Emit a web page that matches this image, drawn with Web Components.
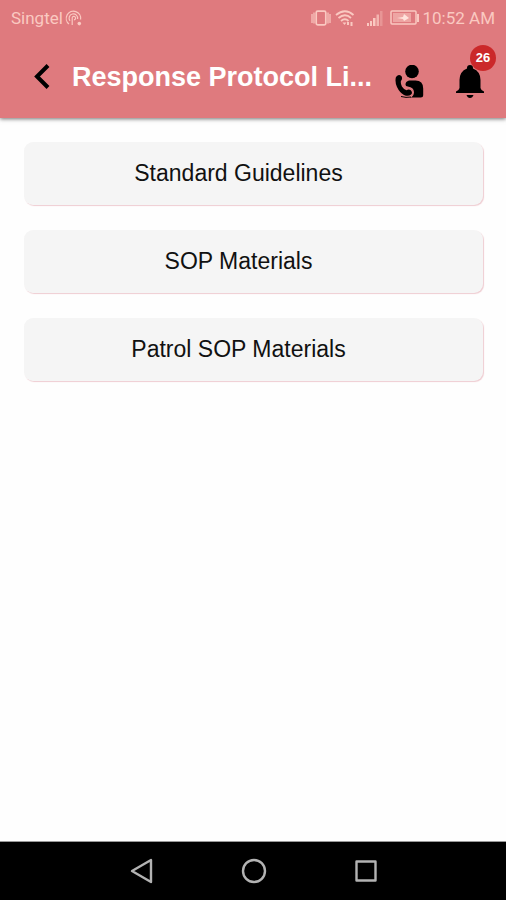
<!DOCTYPE html>
<html lang="en">
<head>
<meta charset="utf-8">
<meta name="viewport" content="width=device-width, initial-scale=1">
<title>Response Protocol List</title>
<style>
  body { margin: 0; background: #fefefe; font-family: "Liberation Sans", Arial, sans-serif; }
</style>
</head>
<body>
<protocol-app></protocol-app>
<script>
const define = (name, html) => {
  const template = document.createElement('template');
  template.innerHTML = html;
  customElements.define(name, class extends HTMLElement {
    constructor() {
      super();
      this.attachShadow({ mode: 'open' }).append(template.content.cloneNode(true));
    }
  });
};

define('status-bar', `
<style>
  :host { display: flex; align-items: center; justify-content: space-between; height: 36px; padding: 0 11px; color: #fac9c1; font: 17px/20px Roboto, sans-serif; }
  .group { display: flex; align-items: center; }
  svg { display: block; flex: none; }
  .hotspot { margin-left: 2px; }
  .signal { margin-left: 11px; }
  .battery { margin: 0 3px 0 7px; }
  .wifi { margin-left: 4px; }
</style>
<div class="group"><span>Singtel</span>
  <svg class="hotspot" width="17" height="18" viewBox="0 0 17 18" fill="none" stroke="currentColor" stroke-width="1.2"><path d="M4 15A7.2 7.2 0 1 1 15.6 10.5M5 11.8A4.3 4.3 0 1 1 12.6 10M7.2 16v-6.8a1.7 1.7 0 1 1 1.7 1.6"/><circle cx="14.3" cy="14.6" r="1.8" fill="currentColor" stroke="none"/></svg>
</div>
<div class="group">
  <svg width="20" height="18" viewBox="0 0 20 18" fill="none" stroke="currentColor" stroke-width="1.7"><rect x="5.2" y="2.2" width="9.6" height="13.6" rx="1.5"/><path d="M1 5v9M3 3.500v11M17 3.500v11M19 5v9" stroke-width="1.2"/></svg>
  <svg class="wifi" width="20" height="18" viewBox="0 0 20 18" fill="none" stroke="currentColor" stroke-width="1.8"><path d="M1 6Q10-1.500 18.500 6M3.500 9Q10 3.500 16 9M6 12Q10 8.500 13.500 12"/><path d="M7.500 13.500h4L9.500 16z" fill="currentColor" stroke="none"/><path d="M13 13v3M16.500 13v4" stroke-width="2"/></svg>
  <svg class="signal" width="17" height="17" viewBox="0 0 17 17" fill="currentColor"><path d="M1 13h2v3H1zM4 11h2v5H4zM7 8h2.500v8H7z"/><path d="M10.500 4.500H13V16h-2.500z" opacity=".75"/><path d="M14 1h2.500v15H14z" opacity=".35"/></svg>
  <svg class="battery" width="30" height="16" viewBox="0 0 30 16" fill="none" stroke="currentColor" stroke-width="1.500"><rect x="1" y="1" width="25" height="13" rx="1"/><path d="M28 4v8" stroke-width="2"/><path d="M3 3h18v9H3z" fill="currentColor" stroke="none" opacity=".55"/><path d="M7 8l6-1 1-3 5 4-5 3-1-2z" fill="#ffe3dc" stroke="none"/></svg>
  <span>10:52 AM</span>
</div>`);

define('count-badge', `
<style>
  :host { display: grid; place-items: center; width: 26px; height: 26px; border-radius: 50%; background: #cb282a; color: #fff; font: bold 13px/16px "Liberation Sans", Arial, sans-serif; }
</style><slot></slot>`);

define('app-header', `
<style>
  :host { display: block; background: #df7a7e; box-shadow: 0 1px 4px rgba(0,0,0,.55); position: relative; }
  .bar { display: flex; align-items: center; height: 82px; padding: 0 21px 0 30px; }
  h1 { flex: 1; min-width: 0; margin: 0 0 0 18px; overflow: hidden; white-space: nowrap; color: #fff; font-size: 27px; line-height: 34px; }
  button { display: block; flex: none; border: 0; padding: 0; background: none; color: #000; }
  svg { display: block; }
  .call { margin: 10px 30px 0 16px; }
  .bell { position: relative; margin-top: 8px; }
  count-badge { position: absolute; left: 15px; top: -19px; }
</style>
<status-bar></status-bar>
<div class="bar">
  <button aria-label="Back"><svg width="24" height="28" viewBox="0 0 24 28" fill="none" stroke="currentColor" stroke-width="4"><path d="M18 2.500 7 13.500l11 11"/></svg></button>
  <h1><slot></slot></h1>
  <button class="call" aria-label="Call contact"><svg width="30" height="34" viewBox="0 0 30 34" fill="currentColor"><circle cx="17" cy="6.500" r="6.800"/><path d="M14 15.500h6.500q7.700 0 7.700 8v6.500q0 2.500-2.500 2.500H15q3.500-2 3.200-5.200-.4-4.600-5.500-5.300-2-.3-2.200-2.200-.1-3.300 3.500-4.300z"/><path d="M3 10.200q2.400-1 3.700 1.300 1 2.500-.8 4.500-.4 3 1 5.500 1.800 3 4.600 3.700 2.300-1.600 4.300.1 2.200 2.200.3 4.300-3 2.300-7.100.3Q4.500 27.500 2 22-.2 17 .8 12.600q.6-1.700 2.200-2.400z"/><path d="M7.500 17.500q1.500 4.500 5.200 4.700 5.500.7 5.700 5.200 0 2.800-2.400 4.600" fill="none" stroke="#df7a7e" stroke-width="1.200"/><path d="M6 31.500q5 1.500 10 .5" stroke="currentColor" fill="none"/></svg></button>
  <button class="bell" aria-label="Notifications, 26 new"><svg width="30" height="34" viewBox="0 0 30 34" fill="currentColor"><path d="M12 4.500V4q0-3 3-3t3 3v.5q7.500 3 7.500 11.500v8q.5 2.500 3.500 3.500v1.500H1v-1.500q3-1 3.500-3.500v-8Q4.500 7.500 12 4.500zM11.500 31h7q-1 3-3.500 3t-3.500-3z"/></svg><count-badge>26</count-badge></button>
</div>`);

define('protocol-item', `
<style>
  :host { display: block; }
  button { display: block; width: 100%; border: 0; border-radius: 9px; padding: 16px 30px 17px 0; background: #f5f5f5; box-shadow: 1px 1px 1px #efcdd2; color: #111; font: 23px/30px "Liberation Sans", Arial, sans-serif; text-align: center; }
</style><button><slot></slot></button>`);

define('nav-bar', `
<style>
  :host { display: flex; justify-content: center; align-items: center; gap: 84px; height: 58px; padding-left: 2px; background: #000; border-top: 1px solid #999; }
  button { display: block; border: 0; padding: 0; background: none; color: #b3b3b3; }
  svg { display: block; }
</style>
<button aria-label="Back"><svg width="28" height="28" viewBox="0 0 28 28" fill="none" stroke="currentColor" stroke-width="2.400" stroke-linejoin="round"><path d="M23 3v22L4 14z"/></svg></button>
<button aria-label="Home"><svg width="28" height="28" viewBox="0 0 28 28" fill="none" stroke="currentColor" stroke-width="2.400"><circle cx="14" cy="14" r="11"/></svg></button>
<button aria-label="Recent apps"><svg width="28" height="28" viewBox="0 0 28 28" fill="none" stroke="currentColor" stroke-width="2.400" stroke-linejoin="round"><rect x="4.500" y="4.500" width="19" height="19"/></svg></button>`);

define('protocol-app', `
<style>
  :host { display: flex; flex-direction: column; min-height: 100vh; }
  main { flex: 1; display: flex; flex-direction: column; gap: 25px; padding: 24px 23px 24px 24px; }
</style>
<app-header>Response Protocol Li...</app-header>
<main>
  <protocol-item>Standard Guidelines</protocol-item>
  <protocol-item>SOP Materials</protocol-item>
  <protocol-item>Patrol SOP Materials</protocol-item>
</main>
<nav-bar></nav-bar>`);
</script>
</body>
</html>
